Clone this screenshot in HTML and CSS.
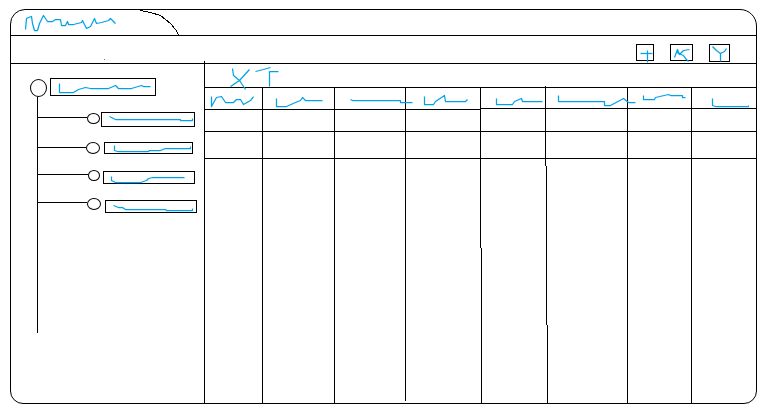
FILE: index.html
```html
<!DOCTYPE html>
<html lang="en">
<head>
<meta charset="utf-8">
<title>Wireframe</title>
<link rel="stylesheet" href="styles.css">
</head>
<body>
<div class="window">
  <header class="titlebar">
    <svg class="ink title-ink" width="95" height="25" viewBox="24 10 95 25"><polyline points="25.5,29.5 26.5,18.5 28.5,17.5 31.5,16.5 32.5,23.5 34.5,30.5 37.5,30.5 39.5,23.5 43.5,15.5 47.5,21.5 52.5,21.5 55.5,19.5 60.5,19.5 61.5,25.5 65.5,25.5 67.5,21.5 68.5,24.5 73.5,24.5 81.5,22.5 82.5,20.5 86.5,28.5 90.5,26.5 94.5,18.5 96.5,23.5 101.5,22.5 108.5,20.5 110.5,18.5 115.5,23.5"/></svg>
    <svg class="tab-curve" width="42" height="27" viewBox="140 10 42 27"><polyline points="140.5,10.5 150.5,12.5 160.5,15.5 170.5,23.5 175.5,29.5 178.5,34.5 180.5,36.5"/></svg>
  </header>

  <div class="toolbar">
    <span class="dot"></span>
    <div class="tool tool-add"><svg class="ink" width="16" height="15" viewBox="637 45 16 15"><polyline points="640.5,53.5 652.5,53.5"/><polyline points="647.5,50.5 647.5,62.5"/></svg></div>
    <div class="tool tool-edit"><svg class="ink" width="21" height="15" viewBox="671 45 21 15"><polyline points="674.5,57.5 677.5,49.5 679.5,54.5 683.5,50.5 689.5,49.5"/><polyline points="676.5,52.5 683.5,55.5 686.5,59.5 688.5,61.5"/></svg></div>
    <div class="tool tool-filter"><svg class="ink" width="19" height="16" viewBox="710 45 19 16"><polyline points="712.5,46.5 716.5,50.5 720.5,53.5 724.5,51.5 726.5,48.5"/><polyline points="720.5,53.5 720.5,61.5"/></svg></div>
  </div>

  <main class="main">
    <aside class="sidebar">
      <div class="root">
        <span class="root-node"></span>
        <div class="root-label"><svg class="ink" width="104" height="16" viewBox="51 79 104 16"><polyline points="59.5,83.5 59.5,92.5 73.5,92.5 78.5,89.5 85.5,87.5 90.5,88.5 108.5,88.5 115.5,85.5 118.5,88.5 131.5,88.5 141.5,85.5 143.5,86.5 150.5,86.5"/></svg></div>
      </div>
      <div class="children">
        <div class="child child-a">
          <span class="link"></span><span class="node"></span>
          <div class="label"><svg class="ink" width="92" height="13" viewBox="102 113 92 13"><polyline points="109.5,116.5 115.5,119.5 180.5,119.5 180.5,120.5 192.5,120.5 192.5,118.5"/></svg></div>
        </div>
        <div class="child child-b">
          <span class="link"></span><span class="node"></span>
          <div class="label"><svg class="ink" width="87" height="10" viewBox="105 143 87 10"><polyline points="114.5,145.5 114.5,150.5 117.5,151.5 148.5,151.5 149.5,150.5 160.5,150.5 165.5,148.5 190.5,148.5 190.5,146.5"/></svg></div>
        </div>
        <div class="child child-c">
          <span class="link"></span><span class="node"></span>
          <div class="label"><svg class="ink" width="90" height="11" viewBox="104 172 90 11"><polyline points="111.5,176.5 111.5,180.5 115.5,182.5 140.5,182.5 146.5,180.5 148.5,178.5 152.5,177.5 184.5,177.5"/></svg></div>
        </div>
        <div class="child child-d">
          <span class="link"></span><span class="node"></span>
          <div class="label"><svg class="ink" width="90" height="11" viewBox="106 201 90 11"><polyline points="113.5,205.5 118.5,207.5 122.5,207.5 125.5,209.5 165.5,209.5 166.5,210.5 192.5,210.5 192.5,208.5"/></svg></div>
        </div>
      </div>
    </aside>

    <section class="content">
      <div class="strip">
        <svg class="ink" width="80" height="23" viewBox="205 64 80 23"><polyline points="232.5,68.5 233.5,75.5 239.5,80.5 245.5,89.5"/><polyline points="249.5,69.5 239.5,80.5 230.5,86.5"/><polyline points="255.5,71.5 263.5,69.5 270.5,67.5"/><polyline points="269.5,86.5 269.5,71.5 278.5,71.5"/></svg>
      </div>
      <div class="grid">
        <div class="cell"><svg class="ink" width="57" height="21" viewBox="205 88 57 21"><polyline points="211.5,96.5 211.5,106.5 216.5,97.5 221.5,96.5 225.5,102.5 233.5,102.5 236.5,99.5 240.5,99.5 243.5,104.5 250.5,100.5 253.5,96.5"/></svg></div>
        <div class="cell"><svg class="ink" width="71" height="21" viewBox="263 88 71 21"><polyline points="276.5,98.5 276.5,106.5 286.5,106.5 295.5,102.5 300.5,100.5 302.5,97.5 305.5,100.5 322.5,100.5"/></svg></div>
        <div class="cell"><svg class="ink" width="70" height="21" viewBox="335 88 70 21"><polyline points="350.5,99.5 352.5,100.5 400.5,100.5 400.5,102.5 412.5,102.5"/></svg></div>
        <div class="cell"><svg class="ink" width="74" height="21" viewBox="406 88 74 21"><polyline points="424.5,96.5 424.5,104.5 433.5,104.5 435.5,101.5 444.5,95.5 445.5,101.5 465.5,101.5 467.5,99.5"/></svg></div>
        <div class="cell head-tail"><svg class="ink" width="64" height="21" viewBox="481 88 64 21"><polyline points="496.5,98.5 496.5,104.5 512.5,104.5 514.5,101.5 521.5,98.5 522.5,101.5 542.5,101.5"/></svg></div>
        <div class="cell head-tail stub"><svg class="ink" width="81" height="21" viewBox="546 88 81 21"><polyline points="558.5,95.5 558.5,101.5 604.5,101.5 604.5,105.5 610.5,105.5 623.5,98.5 628.5,102.5 635.5,102.5"/></svg></div>
        <div class="cell head-tail"><svg class="ink" width="63" height="21" viewBox="628 88 63 21"><polyline points="643.5,95.5 643.5,99.5 654.5,99.5 655.5,97.5 668.5,94.5 670.5,95.5 682.5,95.5 682.5,97.5 685.5,97.5"/></svg></div>
        <div class="cell head-tail last"><svg class="ink" width="64" height="21" viewBox="692 88 64 21"><polyline points="712.5,98.5 712.5,105.5 715.5,106.5 748.5,106.5 748.5,105.5"/></svg></div>

        <div class="cell"></div><div class="cell"></div><div class="cell"></div><div class="cell"></div>
        <div class="cell"></div><div class="cell"></div><div class="cell"></div><div class="cell last"></div>

        <div class="cell"></div><div class="cell"></div><div class="cell"></div><div class="cell"></div>
        <div class="cell"></div><div class="cell"></div><div class="cell"></div><div class="cell last"></div>

        <div class="cell fill"></div>
        <div class="cell fill"></div>
        <div class="cell fill fill-short"></div>
        <div class="cell fill fill-upper"></div>
        <div class="cell fill fill-shifted"></div>
        <div class="cell fill fill-wander"></div>
        <div class="cell fill"></div>
        <div class="cell fill last"></div>
      </div>
    </section>
  </main>
</div>
</body>
</html>
```

FILE: styles.css
```css
* {
  box-sizing: border-box;
}

html,
body {
  margin: 0;
  background: #fff;
}

body {
  padding: 9px 0 0 10px;
  overflow: hidden;
}

svg {
  display: block;
  overflow: visible;
  shape-rendering: crispEdges;
}

polyline {
  fill: none;
  stroke-width: 1;
}

.ink {
  shape-rendering: auto;
}

.ink polyline {
  stroke: #00a2e8;
  stroke-width: 1.25;
  stroke-linejoin: round;
}

.window {
  width: 747px;
  height: 395px;
  display: flex;
  flex-direction: column;
  border: 1px solid #000;
  border-radius: 15px 17px 13px 13px;
}

.titlebar {
  flex: none;
  height: 26px;
  display: flex;
  padding-left: 13px;
  border-bottom: 1px solid #000;
}

.tab-curve {
  margin-left: 21px;
}

.tab-curve polyline {
  stroke: #000;
}

.toolbar {
  flex: none;
  height: 28px;
  display: flex;
  align-items: flex-start;
  gap: 16px;
  padding: 8px 26px 0 0;
  border-bottom: 1px solid #000;
}

.dot {
  width: 1px;
  height: 1px;
  margin: 15px auto 0 93px;
  background: #00a2e8;
}

.tool {
  flex: none;
  height: 17px;
  border: 1px solid #000;
}

.tool-add {
  width: 18px;
}

.tool-edit {
  width: 23px;
}

.tool-filter {
  width: 21px;
  height: 18px;
}

.main {
  flex: 1;
  min-height: 0;
  display: flex;
}

.sidebar {
  position: relative;
  flex: none;
  width: 194px;
  padding-top: 14px;
  border-right: 1px solid #000;
}

.sidebar::after {
  content: "";
  position: absolute;
  top: -3px;
  right: -1px;
  width: 1px;
  height: 3px;
  background: #000;
}

.root {
  display: flex;
  gap: 3px;
  padding-left: 19px;
}

.root-node {
  flex: none;
  width: 17px;
  height: 18px;
  margin-top: 1px;
  border: 1px solid #000;
  border-radius: 50%;
}

.root-label {
  flex: none;
  width: 106px;
  height: 18px;
  border: 1px solid #000;
}

.children {
  width: 170px;
  height: 236px;
  margin-left: 26px;
  padding-top: 15px;
  border-left: 1px solid #000;
}

.child {
  display: flex;
  align-items: flex-start;
}

.link {
  flex: none;
  height: 1px;
  background: #000;
}

.node {
  flex: none;
  border: 1px solid #000;
  border-radius: 50%;
}

.label {
  flex: none;
  border: 1px solid #000;
}

.child-a {
  height: 30px;
}

.child-a .link {
  width: 49px;
  margin-top: 5px;
}

.child-a .node {
  width: 13px;
  height: 11px;
  margin-top: 1px;
}

.child-a .label {
  width: 94px;
  height: 15px;
  margin-left: 1px;
}

.child-b {
  height: 28px;
}

.child-b .link {
  width: 48px;
  margin-top: 5px;
}

.child-b .node {
  width: 14px;
  height: 12px;
}

.child-b .label {
  width: 89px;
  height: 12px;
  margin-left: 4px;
}

.child-c {
  height: 28px;
}

.child-c .link {
  width: 50px;
  margin-top: 4px;
}

.child-c .node {
  width: 12px;
  height: 11px;
}

.child-c .label {
  width: 92px;
  height: 13px;
  margin: 1px 0 0 3px;
}

.child-d .link {
  width: 49px;
  margin-top: 4px;
}

.child-d .node {
  width: 14px;
  height: 12px;
}

.child-d .label {
  width: 92px;
  height: 13px;
  margin: 2px 0 0 4px;
}

.content {
  flex: 1;
  min-width: 0;
  display: flex;
  flex-direction: column;
}

.strip {
  flex: none;
  height: 24px;
  border-bottom: 1px solid #000;
}

.grid {
  flex: 1;
  display: grid;
  grid-template-columns: 58px 72px 71px 75px 65px 82px 64px 64px;
  grid-template-rows: 22px 22px 27px 1fr;
}

.cell {
  position: relative;
  border-right: 1px solid #000;
  border-bottom: 1px solid #000;
}

.last {
  border-right: 0;
}

.head-tail {
  border-bottom: 0;
  background: linear-gradient(#000 0 0) 0 calc(100% - 1px) / 100% 1px no-repeat;
}

.stub::before {
  content: "";
  position: absolute;
  top: -2px;
  left: -1px;
  width: 1px;
  height: 2px;
  background: #000;
}

.fill {
  border-bottom: 0;
}

.fill-short {
  border-right: 0;
  background: linear-gradient(#000 0 0) right top / 1px 242px no-repeat;
}

.fill-upper {
  border-right: 0;
  background: linear-gradient(#000 0 0) right top / 1px 89px no-repeat;
}

.fill-shifted {
  border-right: 0;
  background:
    linear-gradient(#000 0 0) left bottom / 1px 155px no-repeat,
    linear-gradient(#000 0 0) right top / 1px 7px no-repeat;
}

.fill-shifted::after {
  content: "";
  position: absolute;
  top: 100%;
  left: 0;
  width: 1px;
  height: 3px;
  background: #000;
}

.fill-wander {
  background:
    linear-gradient(#000 0 0) 0 7px / 1px 159px no-repeat,
    linear-gradient(#000 0 0) 1px bottom / 1px 78px no-repeat;
}
```
